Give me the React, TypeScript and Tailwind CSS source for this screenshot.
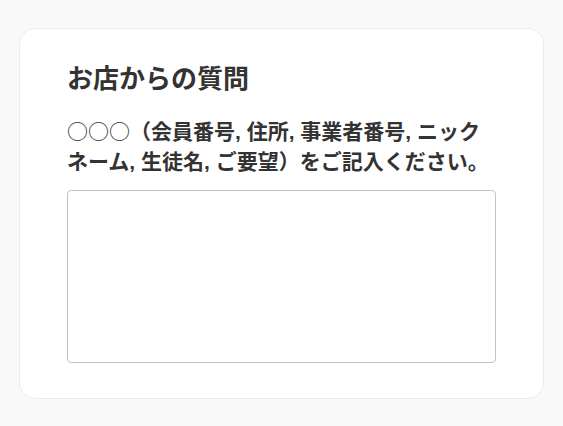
export default function App() {
  return (
    <div
      className="min-h-[426px] bg-[#f9f9f9] px-[19px] pt-[28px]"
      style={{ fontFamily: '"Liberation Sans", "Noto Sans CJK JP", sans-serif' }}
    >
      <div className="rounded-[16px] border border-[#ececec] bg-white px-[47px] pt-[31px] pb-[35px]">
        <h2 className="text-[26px] font-bold leading-[38px] text-[#333333]">お店からの質問</h2>
        <p className="mt-[17px] text-[21px] font-bold leading-[30px] text-[#333333]">
          <span className="font-normal" style={{ fontFamily: '"Noto Sans CJK JP", sans-serif' }}>
            ○○○
          </span>
          （会員番号, 住所, 事業者番号, ニックネーム, 生徒名, ご要望）をご記入ください。
        </p>
        <textarea className="mt-[13px] block h-[173px] w-full resize-none rounded-[4px] border border-[#c4c4c4] bg-white" />
      </div>
    </div>
  );
}
